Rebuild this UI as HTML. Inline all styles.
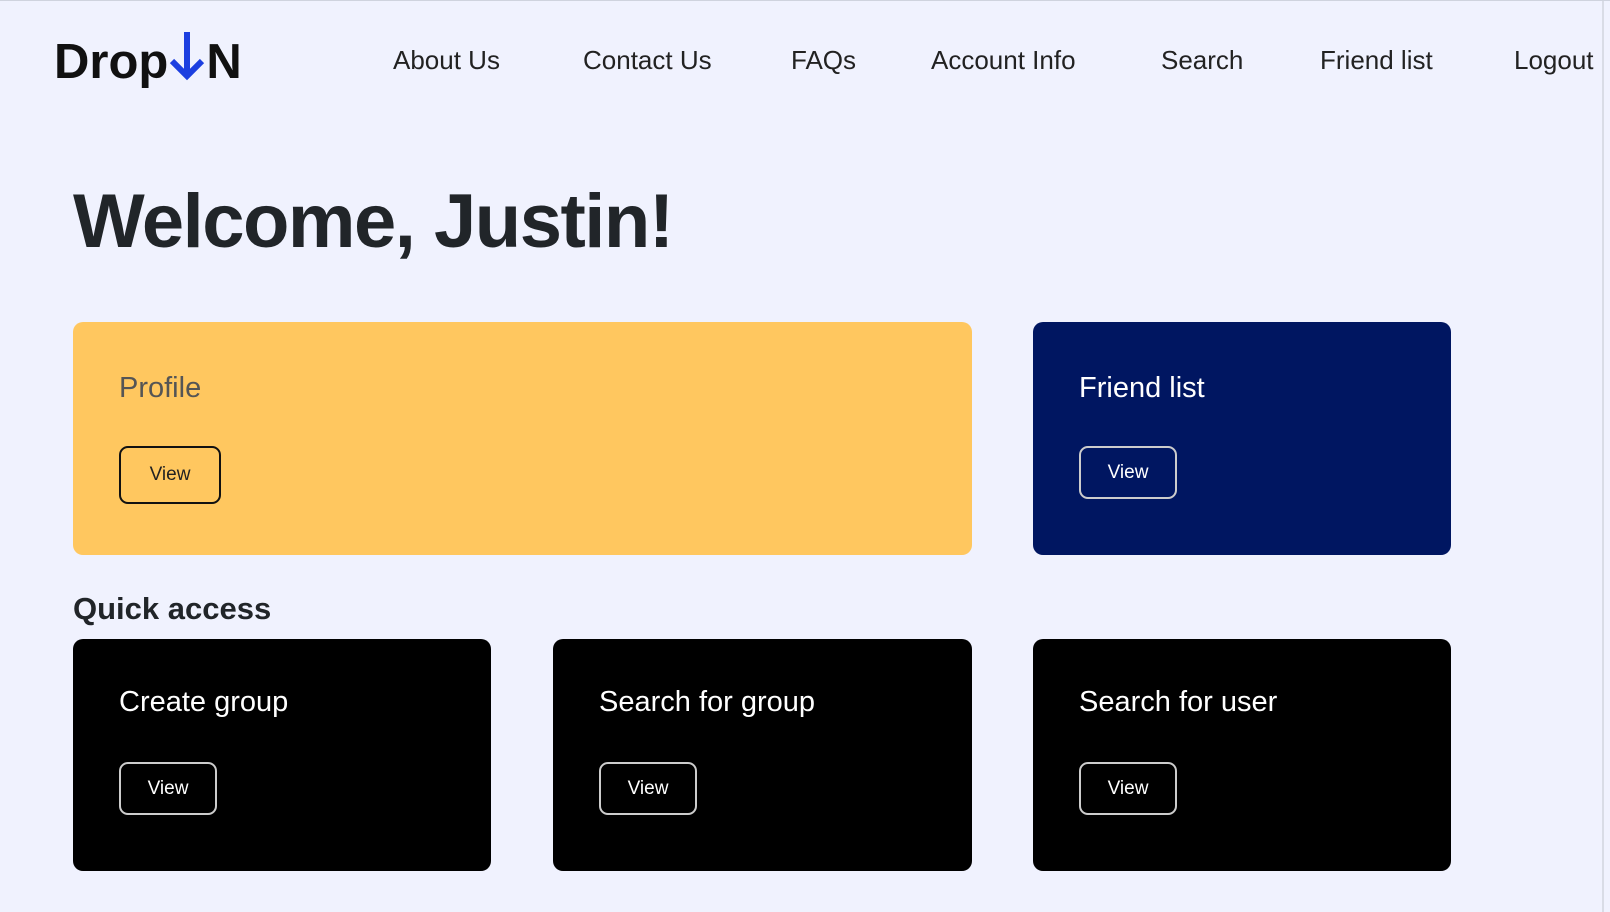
<!DOCTYPE html>
<html><head><meta charset="utf-8"><style>
*{box-sizing:border-box;margin:0;padding:0}
html,body{width:1610px;height:912px;overflow:hidden}
body{background:#f0f2fe;font-family:"Liberation Sans",sans-serif;color:#212529;position:relative;border-top:1px solid #cfd3de;}
.rb{position:absolute;right:6px;top:0;width:2px;height:912px;background:#d9dce6}
.logo{position:absolute;left:54px;top:29px;font-size:49px;font-weight:bold;color:#111;white-space:nowrap}
.logo svg{vertical-align:-4px;margin:0 -2px}
.nav a{position:absolute;top:44px;font-size:26px;color:#222;text-decoration:none;white-space:nowrap}
h1{position:absolute;left:73px;top:177px;font-size:76px;font-weight:bold;color:#212529;letter-spacing:-1.5px}
.card{position:absolute;border-radius:10px}
.card .t{position:absolute;left:46px;top:50px;font-size:29px;font-weight:300}
.btn{position:absolute;left:46px;border-radius:9px;font-size:19px;display:flex;align-items:center;justify-content:center}
h2{position:absolute;left:73px;top:590px;font-size:31px;font-weight:bold;color:#212529}
</style></head><body>
<div class="rb"></div>
<div class="logo">Drop<svg width="42" height="52" viewBox="0 0 42 52"><path d="M21 2 V46 M6 31 L21 46 L36 31" stroke="#1c3fe0" stroke-width="6" fill="none"/></svg>N</div>
<div class="nav">
<a style="left:393px">About Us</a><a style="left:583px">Contact Us</a><a style="left:791px">FAQs</a><a style="left:931px">Account Info</a><a style="left:1161px">Search</a><a style="left:1320px">Friend list</a><a style="left:1514px">Logout</a>
</div>
<h1>Welcome, Justin!</h1>
<div class="card" style="left:73px;top:321px;width:899px;height:233px;background:#ffc75f">
<div class="t" style="color:#555">Profile</div>
<div class="btn" style="top:124px;width:102px;height:58px;border:2px solid #111;color:#222">View</div></div>
<div class="card" style="left:1033px;top:321px;width:418px;height:233px;background:#001661">
<div class="t" style="color:#fff">Friend list</div>
<div class="btn" style="top:124px;width:98px;height:53px;border:2px solid #ccc;color:#fff">View</div></div>
<h2>Quick access</h2>
<div class="card" style="left:73px;top:638px;width:418px;height:232px;background:#000">
<div class="t" style="color:#fff;top:47px">Create group</div>
<div class="btn" style="top:123px;width:98px;height:53px;border:2px solid #ccc;color:#fff">View</div></div>
<div class="card" style="left:553px;top:638px;width:419px;height:232px;background:#000">
<div class="t" style="color:#fff;top:47px">Search for group</div>
<div class="btn" style="top:123px;width:98px;height:53px;border:2px solid #ccc;color:#fff">View</div></div>
<div class="card" style="left:1033px;top:638px;width:418px;height:232px;background:#000">
<div class="t" style="color:#fff;top:47px">Search for user</div>
<div class="btn" style="top:123px;width:98px;height:53px;border:2px solid #ccc;color:#fff">View</div></div>
</body></html>
